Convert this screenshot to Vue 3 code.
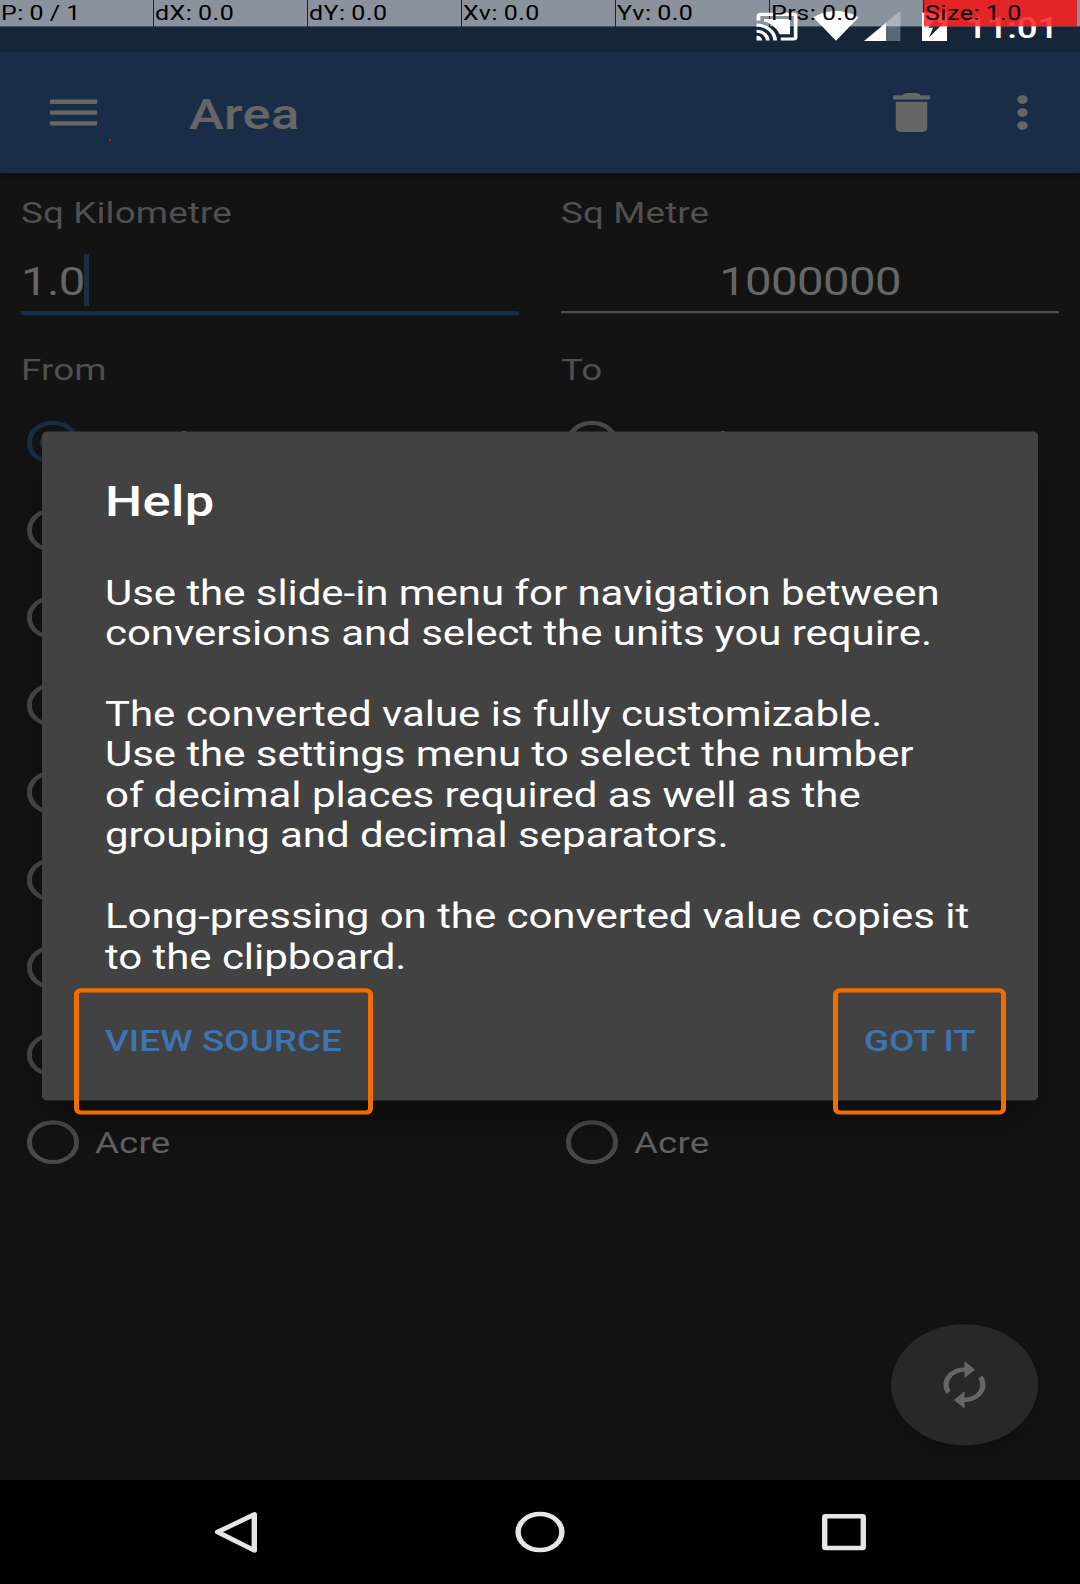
<script setup>
const samples = ['P: 0 / 1', 'dX: 0.0', 'dY: 0.0', 'Xv: 0.0', 'Yv: 0.0', 'Prs: 0.0', 'Size: 1.0']

// The open dialog covers the captions of the middle rows.
const units = ['Sq Kilometre', '', '', '', '', '', '', '', 'Acre']

const columns = [
  { id: 'from', unit: 'Sq Kilometre', value: '1.0', caption: 'From', focused: true, selected: 0 },
  { id: 'to', unit: 'Sq Metre', value: '1000000', caption: 'To', focused: false, selected: 1 }
]

const help = `Use the slide-in menu for navigation between
conversions and select the units you require.

The converted value is fully customizable.
Use the settings menu to select the number
of decimal places required as well as the
grouping and decimal separators.

Long-pressing on the converted value copies it
to the clipboard.`
</script>

<template>
  <div class="viewport">
    <div class="device">
      <header class="status">
        <svg class="status-icons" viewBox="750 0 200 63" width="200" height="63">
          <g fill="#fff">
            <path transform="translate(754.7 10) scale(1.86)" d="M1 18v3h3c0-1.66-1.34-3-3-3zm0-4v2c2.76 0 5 2.24 5 5h2c0-3.87-3.13-7-7-7zm18-7H5v1.63c3.96 1.28 7.09 4.41 8.37 8.37H19V7zM1 10v2c4.97 0 9 4.03 9 9h2c0-6.08-4.93-11-11-11zm20-7H3c-1.1 0-2 .9-2 2v3h2V5h18v14h-7v2h7c1.1 0 2-.9 2-2V5c0-1.1-.9-2-2-2z" />
            <path transform="translate(812.6 7.4) scale(1.95)" d="M12.01 21.49L23.64 7c-.45-.34-4.93-4-11.64-4C5.28 3 .81 6.66.36 7l11.63 14.49z" />
            <path fill-opacity=".3" d="M886 49.6h14.4V12.9L886 27.500z" />
            <path d="M864 49.6h22V27.5z" />
            <path fill-rule="evenodd" d="M922 15.4h25v34.2h-25zM938 17L928.500 33.500h4.500L929 45.500L943.500 28h-5.500z" />
          </g>
        </svg>
        <span class="clock">11:01</span>
      </header>

      <div class="pointer-bar">
        <span v-for="(s, i) in samples" :key="s" class="sample" :class="{ hot: i === 6 }">{{ s }}</span>
        <span class="tail"></span>
      </div>

      <nav class="app-bar">
        <svg class="menu" viewBox="0 0 24 24"><path d="M3 18h18v-2H3v2zm0-5h18v-2H3v2zm0-7v2h18V6H3z" /></svg>
        <h1>Area</h1>
        <svg class="trash" viewBox="0 0 24 24"><path d="M6 19c0 1.100.9 2 2 2h8c1.100 0 2-.9 2-2V7H6v12zM19 4h-3.500c-.5-.7-1.200-1-2-1h-3c-.8 0-1.500.3-2 1H5v2h14V4z" /></svg>
        <svg class="more" viewBox="0 0 24 24"><path d="M12 8c1.100 0 2-.9 2-2s-.9-2-2-2-2 .9-2 2 .9 2 2 2zm0 2c-1.100 0-2 .9-2 2s.9 2 2 2 2-.9 2-2-.9-2-2-2zm0 6c-1.100 0-2 .9-2 2s.9 2 2 2 2-.9 2-2-.9-2-2-2z" /></svg>
        <i class="touch-point"></i>
      </nav>

      <main class="content">
        <section v-for="c in columns" :key="c.id" class="column" :class="c.id">
          <div class="label">{{ c.unit }}</div>
          <div class="field" :class="{ focused: c.focused }">
            <span>{{ c.value }}</span><i v-if="c.focused" class="caret"></i>
          </div>
          <div class="label">{{ c.caption }}</div>
          <ul class="units">
            <li v-for="(u, i) in units" :key="i">
              <span class="radio" :class="{ checked: i === c.selected && c.focused }"></span>
              <span class="unit">{{ u }}</span>
            </li>
          </ul>
        </section>
      </main>

      <button class="fab">
        <svg viewBox="0 0 24 24"><path d="M12 6v3l4-4-4-4v3c-4.420 0-8 3.580-8 8 0 1.570.46 3.030 1.240 4.260L6.700 14.800c-.45-.83-.7-1.790-.7-2.800 0-3.310 2.690-6 6-6zm6.760 1.740L17.300 9.200c.44.84.7 1.790.7 2.800 0 3.310-2.690 6-6 6v-3l-4 4 4 4v-3c4.420 0 8-3.580 8-8 0-1.570-.46-3.030-1.240-4.260z" /></svg>
      </button>

      <div class="dialog">
        <h2>Help</h2>
        <p>{{ help }}</p>
        <div class="actions">
          <button class="source"><span>VIEW SOURCE</span></button>
          <button class="confirm"><span>GOT IT</span></button>
        </div>
      </div>

      <footer class="nav-bar">
        <svg viewBox="0 0 1080 126" width="1080" height="126" fill="none" stroke="#e6e6e6" stroke-width="5.400" stroke-linejoin="round">
          <path d="M254.300 41.700v43.600L217.600 63z" />
          <circle cx="540" cy="63" r="21.900" />
          <rect x="824.700" y="44" width="38.600" height="38.400" rx="1" />
        </svg>
      </footer>
    </div>
  </div>
</template>

<style>
body {
  margin: 0;
  background: #000;
}
</style>

<style scoped>
.viewport {
  width: 1080px;
  height: 1584px;
  overflow: hidden;
}

/* 1080x1920 device canvas shown at 82.5% height */
.device {
  position: relative;
  display: flex;
  flex-direction: column;
  width: 1080px;
  height: 1920px;
  transform: scaleY(0.825);
  transform-origin: 0 0;
  background: #131313;
  font-family: Roboto, "Liberation Sans", sans-serif;
  overflow: hidden;
}

h1, h2, p, ul {
  margin: 0;
  padding: 0;
}

.status {
  display: flex;
  flex: none;
  height: 63px;
  box-sizing: border-box;
  padding-left: 750px;
  background: #15263b;
  color: #fff;
}

.status-icons {
  flex: none;
}

.clock {
  margin: 12px 0 0 16px;
  font-size: 36.75px;
  line-height: 43px;
  font-weight: 500;
  letter-spacing: -0.2px;
  white-space: nowrap;
}

.pointer-bar {
  position: absolute;
  top: 0;
  left: 0;
  display: flex;
  width: 1080px;
  height: 32px;
  gap: 1px;
}

.sample {
  width: 153px;
  flex: none;
  box-sizing: border-box;
  padding-left: 1px;
  background: rgba(255, 255, 255, 0.5);
  color: #000;
  font-size: 25px;
  line-height: 32px;
  letter-spacing: 0.5px;
  word-spacing: -1px;
  white-space: nowrap;
}

.sample.hot {
  background: linear-gradient(rgba(255, 0, 0, 0.75), rgba(255, 0, 0, 0.75)), rgba(255, 255, 255, 0.5);
}

.tail {
  flex: 1;
  margin-left: -1px;
  background: rgba(255, 255, 255, 0.5);
}

.app-bar {
  position: relative;
  z-index: 1;
  display: flex;
  align-items: center;
  flex: none;
  height: 147px;
  background: #192e46;
  box-shadow: 0 3px 10px rgba(0, 0, 0, 0.35);
  clip-path: inset(0 0 -20px 0);
}

.app-bar svg {
  flex: none;
  width: 63px;
  height: 63px;
  fill: #666;
}

.app-bar .menu {
  margin-left: 42px;
}

.app-bar h1 {
  flex: 1;
  margin: 3px 0 0 84px;
  color: #666;
  font-size: 52.5px;
  line-height: 62px;
  font-weight: 500;
  letter-spacing: 0.3px;
}

.app-bar .more {
  margin: 0 26px 0 48px;
}

.touch-point {
  position: absolute;
  left: 109px;
  top: 105.500px;
  width: 2px;
  height: 2.400px;
  background: #f00;
}

.content {
  display: flex;
  gap: 42px;
  flex: 1;
  padding: 26px 21px 0;
}

.column {
  flex: 1;
}

.label {
  height: 43px;
  color: #505050;
  font-size: 36.75px;
  line-height: 43px;
  letter-spacing: 0.150px;
}

.field {
  display: flex;
  justify-content: center;
  box-sizing: border-box;
  height: 68.250px;
  margin: 35px 0 45px;
  color: #666;
  font-size: 47.250px;
  line-height: 57px;
  letter-spacing: -0.6px;
  background: linear-gradient(#505050, #505050) 0 63px / 100% 2.700px no-repeat;
}

.field.focused {
  justify-content: flex-start;
  background: linear-gradient(#192e46, #192e46) 0 63px / 100% 5.250px no-repeat;
}

.caret {
  width: 5px;
  height: 63px;
  margin: -6px 0 0 -1px;
  background: #192e46;
}

.units {
  margin: 13px 0 0;
  list-style: none;
}

.to .units {
  margin-left: -1px;
}

.units li {
  display: flex;
  align-items: center;
  height: 106px;
}

.radio {
  display: flex;
  flex: none;
  box-sizing: border-box;
  width: 52.500px;
  height: 52.500px;
  margin-left: 5.500px;
  border: 5.250px solid #4b4b4b;
  border-radius: 50%;
}

.radio.checked {
  border-color: #192e46;
  background: radial-gradient(circle, #192e46 13px, transparent 13.500px);
}

.unit {
  padding: 1px 0 0 16px;
  color: #666;
  font-size: 36.75px;
  line-height: 43px;
  letter-spacing: 0.150px;
}

button {
  margin: 0;
  padding: 0;
  border: 0;
  font-family: inherit;
}

.fab {
  position: absolute;
  left: 891px;
  top: 1605px;
  display: flex;
  align-items: center;
  justify-content: center;
  width: 147px;
  height: 147px;
  border-radius: 50%;
  background: #282828;
  box-shadow: 0 12px 26px rgba(0, 0, 0, 0.25);
}

.fab svg {
  width: 63px;
  height: 63px;
  fill: #666;
}

.dialog {
  position: absolute;
  z-index: 2;
  left: 42px;
  top: 523px;
  box-sizing: border-box;
  width: 996px;
  height: 811px;
  padding-top: 54px;
  border-radius: 5.250px;
  background: #424242;
  box-shadow: 0 28px 60px rgba(0, 0, 0, 0.3);
  color: #fff;
}

.dialog h2 {
  padding-left: 63px;
  font-size: 52.500px;
  line-height: 62px;
  font-weight: 500;
  letter-spacing: 0.3px;
}

.dialog p {
  height: 489px;
  margin-top: 55px;
  padding-left: 63px;
  font-size: 42px;
  line-height: 49px;
  letter-spacing: -0.050px;
  white-space: pre;
}

.actions {
  display: flex;
  justify-content: space-between;
  margin: 14.500px 32px 0;
}

.actions button {
  box-sizing: border-box;
  height: 153px;
  padding: 0 0 26px 26px;
  border: solid #f06d00;
  border-width: 5.800px 5px;
  border-radius: 7px;
  background: none;
  color: #3d74b1;
  font-size: 36.75px;
  line-height: 43px;
  font-weight: 500;
  text-align: left;
  white-space: nowrap;
}

.actions .source {
  width: 299px;
  letter-spacing: 0.1px;
}

.actions .confirm {
  width: 173px;
  letter-spacing: -0.150px;
}

.nav-bar {
  position: relative;
  display: flex;
  flex: none;
  height: 126px;
  background: #000;
}
</style>
